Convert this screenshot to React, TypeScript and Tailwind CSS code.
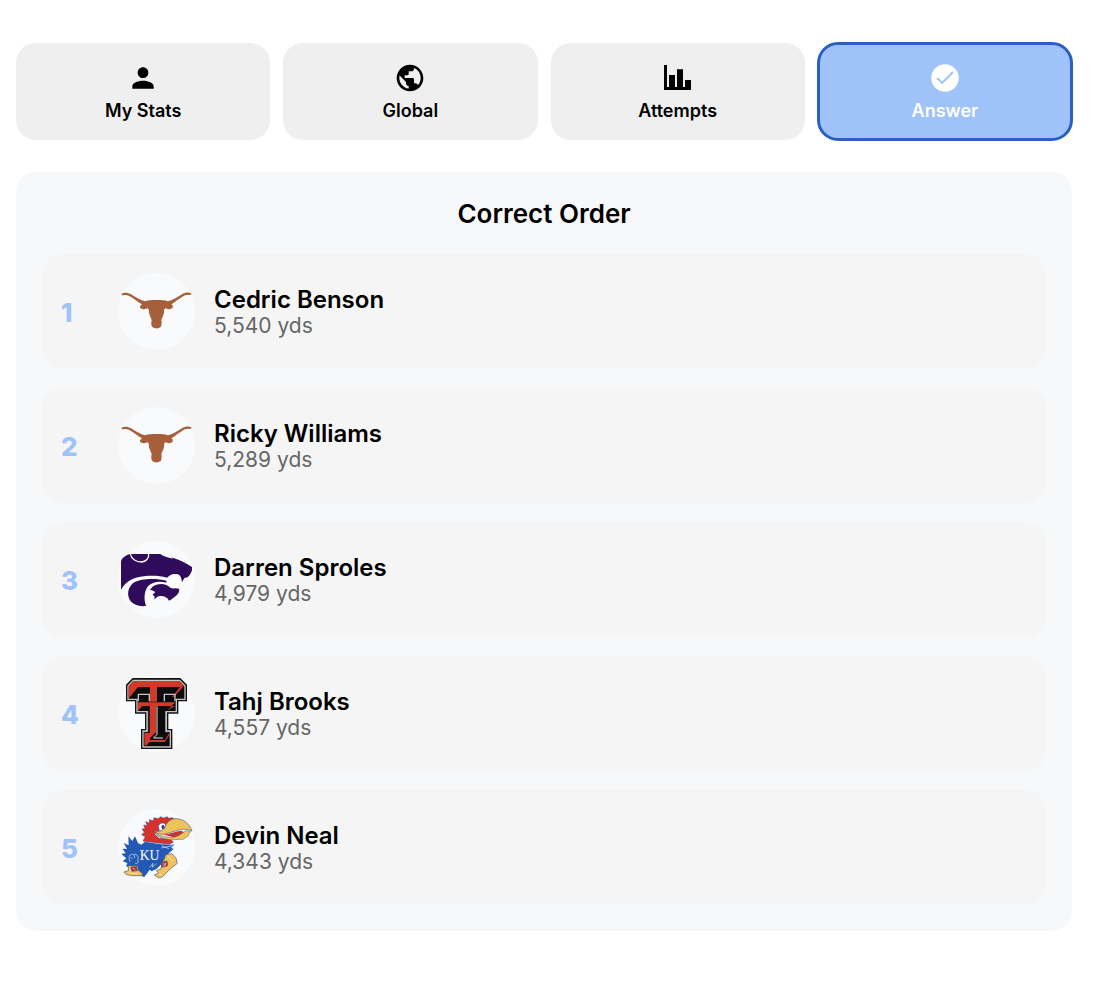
import { useState } from "react";
import type { ReactNode } from "react";
import { MdPerson, MdPublic } from "react-icons/md";

type TabId = "stats" | "global" | "attempts" | "answer";

interface Player {
  name: string;
  yards: number;
  logo: ReactNode;
}

function BarChartIcon() {
  return (
    <svg viewBox="0 0 28 28" className="size-7" fill="currentColor" aria-hidden="true">
      <path d="M0 1h3v22h2V11h6v12h2V5.3h6V23h2v-7h6v10H0z" />
    </svg>
  );
}

function CheckCircleIcon() {
  return (
    <svg viewBox="0 0 28 28" className="size-7" aria-hidden="true">
      <circle cx="14" cy="14" r="13.7" fill="#fff" />
      <path d="M6 14l5.2 5L22 8" fill="none" stroke="#9fc2f8" strokeWidth="1.9" />
    </svg>
  );
}

function LonghornLogo() {
  return (
    <svg viewBox="24 27 231 231" className="size-full overflow-visible" role="img" aria-label="Texas">
      <path
        fill="#a5603b"
        d="M35 89C44 84 55 86 63 91C78 100 91 109 106 112C113 108 123 108 139 108C156 108 166 108 173 112C188 109 201 100 216 91C224 86 235 84 244 88C245 91 243 93 239 93C230 91 224 94 216 99C205 106 196 113 184 121C190 124 188 127 188 131C182 136 174 137 166 133C161 136 163 141 162 146C161 155 155 161 154 168C156 176 155 183 152 189C145 195 133 194 127 189C123 183 123 176 125 168C124 161 118 155 117 146C116 141 118 136 113 133C105 137 96 136 90 131C89 127 91 125 96 121C83 113 74 106 63 99C55 94 48 91 41 94C36 94 34 92 35 89Z"
      />
    </svg>
  );
}

function WildcatLogo() {
  return (
    <svg viewBox="24 18 231 231" className="size-full overflow-visible" role="img" aria-label="Kansas State">
      <g fill="#310b5b">
        <path d="M33 164V82C33 71 44 62 59 57H151C161 65 176 68 190 71L184 67C207 74 229 85 246 96V106C243 115 239 122 233 127L223 129L216 142L211 128C207 119 199 116 188 118C179 121 175 126 171 128C145 120 112 121 87 126C61 131 45 144 33 164Z" />
        <path d="M108 213C83 216 61 205 56 187C51 170 58 152 73 142C94 130 138 129 170 137V143C147 137 126 141 114 154C102 170 101 192 108 213Z" />
        <path d="M126 157C137 147 155 145 167 149C177 153 187 160 198 160L208 162L206 173C199 183 187 191 177 197C171 185 159 181 146 184C140 186 137 190 133 194L134 185L128 179L136 171L126 166L120 165Z" />
      </g>
      <path d="M61 57C64 73 80 81 94 81C109 80 117 70 116 57" fill="none" stroke="#fff" strokeWidth="4" />
      <path d="M171 130C177 121 190 116 203 118C213 121 216 132 214 144C208 157 195 163 183 159C172 154 167 141 171 130Z" fill="#fff" />
    </svg>
  );
}

function DoubleTLogo() {
  return (
    <svg viewBox="24 18 231 231" className="size-full overflow-visible" role="img" aria-label="Texas Tech">
      <path
        fill="#111"
        d="M68 27H211L231 47V97H205V134H175V180H187V240H93V180H105V134H75V97H48V47Z"
      />
      <path
        fill="#c4c6c8"
        d="M69 32H210L227 50V93H201V130H171V184H183V236H97V184H109V130H79V93H52V50Z"
      />
      <path fill="#0c0c0c" d="M70 36H209L223 52V89H197V126H167V188H179V232H101V188H113V126H83V89H56V52Z" />
      <path fill="#d03a2b" d="M70 36H209L222 51L216 54H84L58 86H56V52Z" />
      <path fill="#d03a2b" d="M120 54H141V98H120ZM210 54L219 54L191 84H186Z" />
      <path d="M85 96V76H118V97M163 97V76H195V96" fill="none" stroke="#c4c6c8" strokeWidth="4" />
      <path fill="#d03a2b" d="M83 100H196L185 111H97L84 125ZM119 109H138V190L120 207V216L103 228V192H119Z" />
      <path fill="#d03a2b" d="M173 124L185 111H194ZM103 228L119 213H165L178 191V199L164 219H119L108 230Z" />
      <path d="M113 126V188H101M167 126V188H179" fill="none" stroke="#c4c6c8" strokeWidth="2" />
      <path d="M141 112V196L131 207H159" fill="none" stroke="#e4e4e4" strokeWidth="3" />
    </svg>
  );
}

function JayhawkLogo() {
  return (
    <svg viewBox="24 15 231 231" className="size-full overflow-visible" role="img" aria-label="Kansas">
      <path
        fill="#2459b3"
        d="M55 97L67 111L75 97L84 117L94 122L105 113L127 117L153 121L193 122L183 132L191 134L174 150L161 167L154 181L140 194L125 202L119 197L103 219L84 212L76 187L48 188L52 177L38 172L49 163L34 150L47 147L37 134L51 135L41 117L56 124Z"
      />
      <path
        fill="#d8302d"
        stroke="#394879"
        strokeWidth="1.5"
        d="M99 111L106 98L95 92L103 85L96 75L105 74L101 63L112 65L107 53L119 57L118 47L130 50L132 41L145 44L151 38L161 42L172 38L176 43L186 41L195 46L181 56L167 72L148 78L133 90L147 103L183 106L190 115L178 120L143 117L115 113Z"
      />
      <path d="M145 67C148 57 159 54 167 61L162 78L148 81Z" fill="#fff" stroke="#355ba9" strokeWidth="2" />
      <path d="M158 62C164 62 165 73 159 76C153 75 153 65 158 62Z" fill="#244c99" />
      <path
        fill="#f2c25a"
        stroke="#53607e"
        strokeWidth="2"
        d="M132 80C144 85 155 82 164 73C168 57 179 46 194 44C219 43 237 57 246 81C230 74 212 75 199 80L169 89C153 93 141 90 132 80Z"
      />
      <path d="M158 91C177 92 196 82 213 80C222 82 225 88 224 94L209 105L184 98Z" fill="#cb342e" />
      <path
        d="M135 86C150 97 170 99 188 101C202 98 215 90 227 80L241 82L235 95L220 106L193 107C166 107 144 101 135 86Z"
        fill="#f2c25a"
        stroke="#53607e"
        strokeWidth="1.5"
      />
      <path d="M55 185L83 185L85 199L97 208V215H67L48 211L42 204L55 200Z" fill="#f2c25a" stroke="#425784" strokeWidth="2" />
      <path
        d="M167 152L185 149L198 162L202 178L188 189L174 201L158 218L146 222L133 213L146 207L139 200L152 195L159 178Z"
        fill="#f2c25a"
        stroke="#425784"
        strokeWidth="2"
      />
      <path d="M153 175L171 171L173 185L155 190ZM63 189L80 188L82 200L66 202Z" fill="#b93535" stroke="#344d87" strokeWidth="2" />
      <path
        d="M160 178L168 184M168 176L160 187M69 192L76 198M54 207L83 210M174 157L190 172M146 210L156 213"
        fill="none"
        stroke="#fff0b5"
        strokeWidth="2"
      />
      <path
        d="M60 173C52 154 63 148 70 152C79 148 88 157 83 166C89 175 80 181 75 177M62 159L67 165M73 153L74 162M119 190L129 178L127 190L139 178M155 126L177 134M154 132L188 125"
        fill="none"
        stroke="#dce7ff"
        strokeWidth="2"
      />
      <text x="89" y="167" fill="#fff" fontFamily="Liberation Serif, serif" fontSize="41">
        KU
      </text>
    </svg>
  );
}

const TABS: { id: TabId; label: string; icon: ReactNode }[] = [
  { id: "stats", label: "My Stats", icon: <MdPerson className="size-8" /> },
  { id: "global", label: "Global", icon: <MdPublic className="size-8" /> },
  { id: "attempts", label: "Attempts", icon: <BarChartIcon /> },
  { id: "answer", label: "Answer", icon: <CheckCircleIcon /> },
];

const PLAYERS: Player[] = [
  { name: "Cedric Benson", yards: 5540, logo: <LonghornLogo /> },
  { name: "Ricky Williams", yards: 5289, logo: <LonghornLogo /> },
  { name: "Darren Sproles", yards: 4979, logo: <WildcatLogo /> },
  { name: "Tahj Brooks", yards: 4557, logo: <DoubleTLogo /> },
  { name: "Devin Neal", yards: 4343, logo: <JayhawkLogo /> },
];

function PlayerRow({ player, rank }: { player: Player; rank: number }) {
  return (
    <li className="flex items-center rounded-[20px] bg-[#f5f5f5] p-[19px]">
      <span className="w-[57px] shrink-0 pt-0.5 text-[26px] leading-8 font-extrabold text-[#9fc2f8]">{rank}</span>
      <div className="size-[77px] shrink-0 rounded-full bg-[#f8fafc]">{player.logo}</div>
      <div className="ml-[19px] min-w-0 pt-[3px]">
        <h2 className="text-2xl leading-[26px] font-semibold text-black">{player.name}</h2>
        <p className="text-[21px] leading-[26px] text-[#666666]">{player.yards.toLocaleString("en-US")} yds</p>
      </div>
    </li>
  );
}

export default function App() {
  const [activeTab, setActiveTab] = useState<TabId>("answer");

  return (
    <main className="min-h-screen bg-white pt-[43px] pr-7 pb-16 pl-4 font-['Inter',sans-serif]">
      <nav className="grid grid-cols-4 gap-[13px]">
        {TABS.map((tab) => (
          <button
            key={tab.id}
            type="button"
            aria-pressed={activeTab === tab.id}
            onClick={() => setActiveTab(tab.id)}
            className={`flex flex-col items-center rounded-[20px] px-4 pt-[19px] pb-[18px] ${
              activeTab === tab.id
                ? "bg-[#9fc2f8] text-white outline-3 -outline-offset-2 outline-[#2c60c0]"
                : "bg-[#efefef] text-black"
            }`}
          >
            <span className="flex h-8 items-center">{tab.icon}</span>
            <span className="mt-[5px] text-lg leading-[23px] font-semibold">{tab.label}</span>
          </button>
        ))}
      </nav>

      <section className="mt-8 rounded-[20px] bg-[#f7f8fa] p-[26px]">
        <h1 className="text-center text-[26px] leading-8 font-semibold text-black">Correct Order</h1>
        <ol className="mt-6 flex flex-col gap-[19px]">
          {PLAYERS.map((player, i) => (
            <PlayerRow key={player.name} player={player} rank={i + 1} />
          ))}
        </ol>
      </section>
    </main>
  );
}
